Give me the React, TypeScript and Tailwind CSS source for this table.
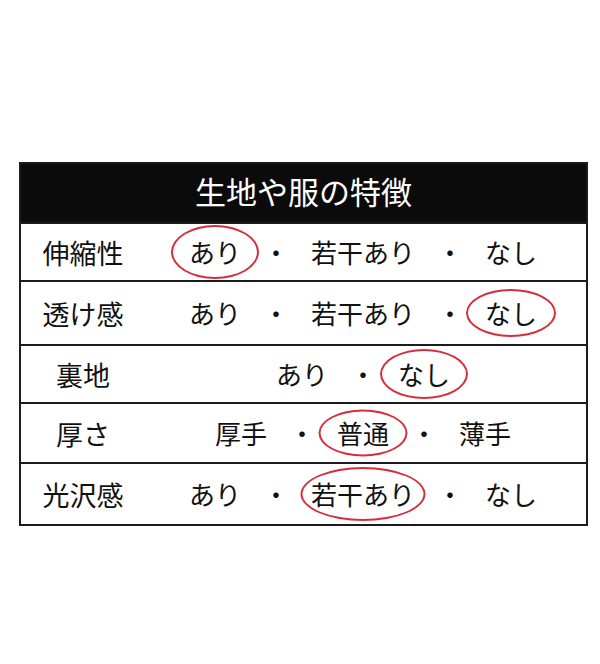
import type {ReactNode} from 'react'

type Item = {text: string; circle?: {w: number; h: number}}

const rows: {label: string; items: Item[]; h: string}[] = [
  {
    label: '伸縮性',
    h: 'h-[58px]',
    items: [{text: 'あり', circle: {w: 88, h: 54}}, {text: '若干あり'}, {text: 'なし'}],
  },
  {
    label: '透け感',
    h: 'h-[64px]',
    items: [{text: 'あり'}, {text: '若干あり'}, {text: 'なし', circle: {w: 90, h: 48}}],
  },
  {
    label: '裏地',
    h: 'h-[58px]',
    items: [{text: 'あり'}, {text: 'なし', circle: {w: 88, h: 50}}],
  },
  {
    label: '厚さ',
    h: 'h-[60px]',
    items: [{text: '厚手'}, {text: '普通', circle: {w: 89, h: 47}}, {text: '薄手'}],
  },
  {
    label: '光沢感',
    h: 'h-[62px]',
    items: [{text: 'あり'}, {text: '若干あり', circle: {w: 125, h: 54}}, {text: 'なし'}],
  },
]

function Word({item}: {item: Item}) {
  return (
    <span className="relative inline-block">
      {item.text}
      {item.circle && (
        <span
          className="pointer-events-none absolute left-1/2 top-1/2 -translate-x-1/2 -translate-y-1/2 rounded-[50%] border-2 border-[#d3303c]"
          style={{width: item.circle.w, height: item.circle.h}}
        />
      )}
    </span>
  )
}

function Row({label, items, h}: {label: string; items: Item[]; h: string}) {
  const parts: ReactNode[] = []
  items.forEach((it, i) => {
    if (i > 0) parts.push(<span key={`d${i}`}>・</span>)
    parts.push(<Word key={i} item={it} />)
  })
  return (
    <div className={`flex items-center border-t-2 border-[#1c1c1c] ${h}`}>
      <div className="w-[124px] shrink-0 text-center text-[27px]">{label}</div>
      <div className="flex flex-1 items-center justify-center gap-[22px] pr-[5px] text-[26px]">{parts}</div>
    </div>
  )
}

export default function App() {
  return (
    <div className="h-[664px] w-[600px] bg-white pl-[19px] pt-[162px] font-['Noto_Sans_CJK_JP',sans-serif] leading-none text-[#111]">
      <div className="w-[569px] border-2 border-[#1c1c1c]">
        <div className="flex h-[58px] items-center justify-center bg-[#0b0b0b] pb-[6px] text-[31px] text-white">
          生地や服の特徴
        </div>
        {rows.map((r) => (
          <Row key={r.label} {...r} />
        ))}
      </div>
    </div>
  )
}
